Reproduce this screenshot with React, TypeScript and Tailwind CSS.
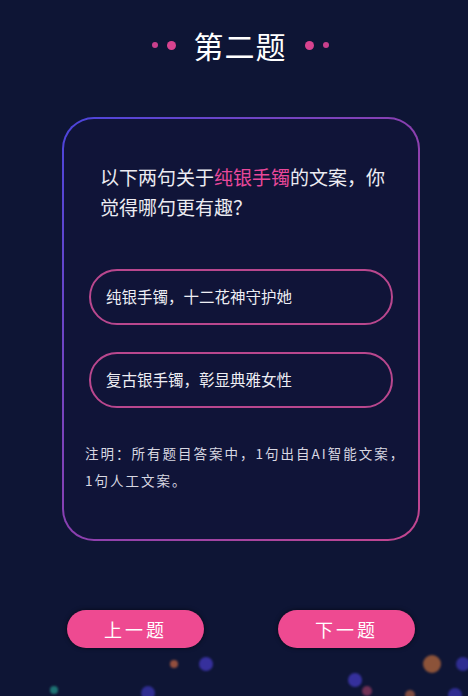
import React from 'react';

const FONT = { fontFamily: '"Noto Sans CJK SC", "Noto Sans", sans-serif' };

const bokeh = [
  { c: 'left-[170px] top-[660px] w-[8px] h-[8px] bg-[#a2553f]' },
  { c: 'left-[199px] top-[657px] w-[14px] h-[14px] bg-[#3b33a8]' },
  { c: 'left-[50px] top-[686px] w-[8px] h-[8px] bg-[#1f7d7a]' },
  { c: 'left-[141px] top-[686px] w-[14px] h-[14px] bg-[#33309c]' },
  { c: 'left-[348px] top-[673px] w-[14px] h-[14px] bg-[#3a34a8]' },
  { c: 'left-[362px] top-[686px] w-[10px] h-[10px] bg-[#7a3358]' },
  { c: 'left-[423px] top-[655px] w-[18px] h-[18px] bg-[#9a5a3a]' },
  { c: 'left-[456px] top-[657px] w-[14px] h-[14px] bg-[#33309c]' },
  { c: 'left-[405px] top-[690px] w-[10px] h-[10px] bg-[#8a5040]' },
  { c: 'left-[448px] top-[688px] w-[14px] h-[14px] bg-[#33309c]' },
];

function Option({ text }: { text: string }) {
  return (
    <button
      type="button"
      className="w-[304px] h-[56px] rounded-full border-2 border-[#b9478e] text-left pl-[15px] text-[15.5px] text-[#eeeef4]"
    >
      {text}
    </button>
  );
}

export default function App() {
  return (
    <div
      className="relative w-[468px] h-[696px] overflow-hidden bg-[#0e1535] flex flex-col items-center"
      style={FONT}
    >
      {/* title */}
      <div className="ml-[12px] h-[92px] flex items-center justify-center gap-[18px] pb-[2px]">
        <div className="flex items-center gap-[9px]">
          <span className="w-[6px] h-[6px] rounded-full bg-[#c8408c]" />
          <span className="w-[9px] h-[9px] rounded-full bg-[#d8438f]" />
        </div>
        <h1 className="text-[30px] leading-none text-white tracking-[1px]">第二题</h1>
        <div className="flex items-center gap-[9px]">
          <span className="w-[9px] h-[9px] rounded-full bg-[#d8438f]" />
          <span className="w-[6px] h-[6px] rounded-full bg-[#c8408c]" />
        </div>
      </div>

      {/* card */}
      <div className="ml-[14px] mt-[25px] w-[358px] h-[424px] rounded-[32px] p-[2px] bg-gradient-to-br from-[#4a44dc] via-[#8a3fb0] to-[#c4458e]">
        <div className="w-full h-full rounded-[30px] bg-[#101438] flex flex-col">
          <div className="mt-[43px] ml-[36px] w-[290px] text-[19px] leading-[30px] text-[#ececf2]">
            <div>
              以下两句关于<span className="text-[#e8489a]">纯银手镯</span>的文案，你
            </div>
            <div>觉得哪句更有趣？</div>
          </div>
          <div className="mt-[47px] flex flex-col items-center gap-[27px]">
            <Option text="纯银手镯，十二花神守护她" />
            <Option text="复古银手镯，彰显典雅女性" />
          </div>
          <div className="mt-[32px] ml-[21px] text-[13.5px] leading-[27px] tracking-[2px] text-[#d8d8e2]">
            <div>注明：所有题目答案中，1句出自AI智能文案，</div>
            <div>1句人工文案。</div>
          </div>
        </div>
      </div>

      {/* nav buttons */}
      <div className="mt-[69px] w-full flex justify-between pl-[67px] pr-[53px]">
        <button
          type="button"
          className="w-[137px] h-[38px] rounded-full bg-[#ee4a91] text-white text-[18px] tracking-[3px] shadow-[0_0_4px_rgba(0,0,0,0.6)]"
        >
          上一题
        </button>
        <button
          type="button"
          className="w-[137px] h-[38px] rounded-full bg-[#ee4a91] text-white text-[18px] tracking-[3px] shadow-[0_0_4px_rgba(0,0,0,0.6)]"
        >
          下一题
        </button>
      </div>

      {/* background bokeh */}
      {bokeh.map((b, i) => (
        <span key={i} className={`absolute rounded-full blur-[1px] opacity-90 ${b.c}`} />
      ))}
    </div>
  );
}
